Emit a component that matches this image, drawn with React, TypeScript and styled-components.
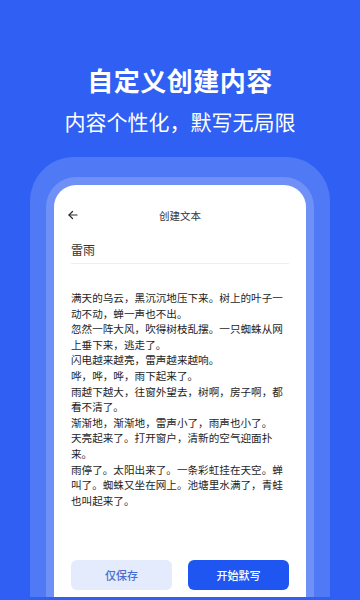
import styled, { createGlobalStyle } from 'styled-components';

const GlobalStyle = createGlobalStyle`
  html, body {
    margin: 0;
    padding: 0;
  }
  body {
    font-family: "Noto Sans CJK SC", "Noto Sans", sans-serif;
  }
`;

const Page = styled.div`
  width: 360px;
  height: 600px;
  overflow: hidden;
  background: #2f60f3;
  display: flex;
  flex-direction: column;
  align-items: center;
`;

const Headline = styled.h1`
  margin: 62px 0 0;
  font-size: 26px;
  line-height: 36px;
  font-weight: 700;
  color: #ffffff;
  letter-spacing: 0.5px;
`;

const Subline = styled.p`
  margin: 8px 0 0;
  font-size: 21px;
  line-height: 30px;
  font-weight: 400;
  color: #ffffff;
`;

const Frame = styled.div`
  margin-top: 21px;
  width: 268px;
  padding: 20px 16px 0;
  background: #5079f5;
  border-radius: 44px 44px 0 0;
`;

const Ring = styled.div`
  padding: 8px 8px 0;
  background: #6e90f7;
  border-radius: 30px 30px 0 0;
`;

const Screen = styled.div`
  height: 412px;
  background: #ffffff;
  border-radius: 22px 22px 0 0;
  display: flex;
  flex-direction: column;
  padding: 0 17px 7px;
  box-sizing: border-box;
`;

const TopBar = styled.div`
  position: relative;
  height: 20px;
  margin-top: 20px;
  display: flex;
  align-items: center;
  justify-content: center;
`;

const BackButton = styled.button`
  position: absolute;
  left: -6px;
  top: 2px;
  border: none;
  background: none;
  padding: 0;
  width: 16px;
  height: 16px;
  display: flex;
  align-items: center;
  justify-content: center;
  color: #2b2b2b;
`;

const BarTitle = styled.span`
  font-size: 10.5px;
  color: #333333;
`;

const TitleField = styled.div`
  margin-top: 10px;
  height: 28px;
  display: flex;
  align-items: center;
  font-size: 12px;
  color: #333333;
  border-bottom: 1px solid #efefef;
`;

const Body = styled.div`
  flex: 1;
  margin-top: 26px;
  font-size: 10.6px;
  line-height: 15.6px;
  color: #1e1e1e;
  line-break: strict;
`;

const Footer = styled.div`
  display: flex;
  gap: 16px;
`;

const ActionButton = styled.button<{ $primary?: boolean }>`
  flex: 1;
  height: 30px;
  border: none;
  border-radius: 6px;
  font-family: inherit;
  font-size: 11px;
  font-weight: 500;
  background: ${(p) => (p.$primary ? '#1f55f0' : '#e4ebfd')};
  color: ${(p) => (p.$primary ? '#ffffff' : '#4b6dcf')};
`;

const lines = [
  '满天的乌云，黑沉沉地压下来。树上的叶子一动不动，蝉一声也不出。',
  '忽然一阵大风，吹得树枝乱摆。一只蜘蛛从网上垂下来，逃走了。',
  '闪电越来越亮，雷声越来越响。',
  '哗，哗，哗，雨下起来了。',
  '雨越下越大，往窗外望去，树啊，房子啊，都看不清了。',
  '渐渐地，渐渐地，雷声小了，雨声也小了。',
  '天亮起来了。打开窗户，清新的空气迎面扑来。',
  '雨停了。太阳出来了。一条彩虹挂在天空。蝉叫了。蜘蛛又坐在网上。池塘里水满了，青蛙也叫起来了。',
];

const App = () => {
  return (
    <>
      <GlobalStyle />
      <Page>
        <Headline>自定义创建内容</Headline>
        <Subline>内容个性化，默写无局限</Subline>
        <Frame>
          <Ring>
            <Screen>
              <TopBar>
                <BackButton aria-label="返回">
                  <svg width="12" height="12" viewBox="0 0 24 24" fill="none" stroke="currentColor" strokeWidth="2.4" strokeLinecap="round" strokeLinejoin="round">
                    <path d="M20 12H4" />
                    <path d="M11 5l-7 7 7 7" />
                  </svg>
                </BackButton>
                <BarTitle>创建文本</BarTitle>
              </TopBar>
              <TitleField>雷雨</TitleField>
              <Body>
                {lines.map((l) => (
                  <div key={l}>{l}</div>
                ))}
              </Body>
              <Footer>
                <ActionButton>仅保存</ActionButton>
                <ActionButton $primary>开始默写</ActionButton>
              </Footer>
            </Screen>
          </Ring>
        </Frame>
      </Page>
    </>
  );
};

export default App;
